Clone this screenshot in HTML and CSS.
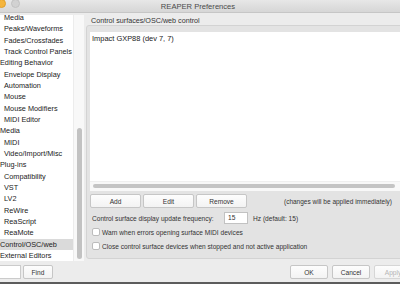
FILE: index.html
```html
<!DOCTYPE html>
<html lang="en">

<head>
  <meta charset="UTF-8">
  <meta name="viewport" content="width=device-width, initial-scale=1.0">
  <title>REAPER Preferences</title>
  <link rel="stylesheet" href="styles.css">
</head>

<body>
  <div class="window">
    <div class="titlebar">
      <div class="lights">
        <span class="light light-min"></span>
        <span class="light light-max"></span>
      </div>
      <div class="title">REAPER Preferences</div>
      <div></div>
    </div>

    <div class="main">
      <!-- Category tree -->
      <div class="sidebar">
        <ul class="tree">
          <li class="child">Media</li>
          <li class="child">Peaks/Waveforms</li>
          <li class="child">Fades/Crossfades</li>
          <li class="child">Track Control Panels</li>
          <li>Editing Behavior</li>
          <li class="child">Envelope Display</li>
          <li class="child">Automation</li>
          <li class="child">Mouse</li>
          <li class="child">Mouse Modifiers</li>
          <li class="child">MIDI Editor</li>
          <li>Media</li>
          <li class="child">MIDI</li>
          <li class="child">Video/Import/Misc</li>
          <li>Plug-ins</li>
          <li class="child">Compatibility</li>
          <li class="child">VST</li>
          <li class="child">LV2</li>
          <li class="child">ReWire</li>
          <li class="child">ReaScript</li>
          <li class="child">ReaMote</li>
          <li class="selected">Control/OSC/web</li>
          <li>External Editors</li>
        </ul>
        <div class="vscroll">
          <div class="vthumb"></div>
        </div>
      </div>

      <!-- Settings page -->
      <div class="panel">
        <div class="group-label">Control surfaces/OSC/web control</div>
        <div class="group">
          <div class="surface-list">
            <div class="surface-items">
              <div class="surface-item">Impact GXP88 (dev 7, 7)</div>
            </div>
            <div class="hscroll">
              <div class="hthumb"></div>
            </div>
          </div>

          <div class="button-row">
            <button class="btn">Add</button>
            <button class="btn">Edit</button>
            <button class="btn">Remove</button>
            <span class="note">(changes will be applied immediately)</span>
          </div>

          <div class="freq-row">
            <span class="freq-label">Control surface display update frequency:</span>
            <span class="field">15</span>
            <span class="freq-hint">Hz (default: 15)</span>
          </div>

          <label class="check-row"><span class="checkbox"></span>Warn when errors opening surface MIDI devices</label>
          <label class="check-row"><span class="checkbox"></span>Close control surface devices when stopped and not active application</label>
        </div>
      </div>
    </div>

    <div class="footer">
      <span class="search"></span>
      <button class="btn btn-find">Find</button>
      <div class="dialog-buttons">
        <button class="btn btn-dialog">OK</button>
        <button class="btn btn-dialog">Cancel</button>
        <button class="btn btn-dialog disabled">Apply</button>
      </div>
    </div>
  </div>
</body>

</html>
```

FILE: styles.css
```css
body {
  margin: 0;
  padding: 0;
  background: #ececec;
  font-family: 'Liberation Sans', Arial, sans-serif;
  color: #222;
  overflow: hidden;
}

.window {
  width: 400px;
  height: 284px;
  display: flex;
  flex-direction: column;
  overflow: hidden;
  border-bottom: 2px solid #5c5c5c;
  box-sizing: border-box;
}

/* Title bar */
.titlebar {
  height: 13px;
  flex: none;
  display: grid;
  grid-template-columns: 1fr auto 1fr;
  padding-right: 4px;
  background: linear-gradient(#e7e7e7, #d6d6d6);
  border-bottom: 1px solid #c6c6c6;
  box-sizing: border-box;
}

.lights {
  display: flex;
  gap: 5px;
  margin-left: -3px;
  margin-top: -1px;
}

.light {
  width: 9px;
  height: 9px;
  border-radius: 50%;
  box-sizing: border-box;
}

.light-min {
  background: #f5b53d;
  border: 1px solid #e0a02c;
}

.light-max {
  background: #d2d2d2;
  border: 1px solid #c2c2c2;
}

.title {
  font-size: 7.6px;
  line-height: 13px;
  color: #4a4a4a;
}

/* Main area */
.main {
  height: 248px;
  flex: none;
  display: flex;
}

.sidebar {
  flex: none;
  margin-top: 2px;
  width: 84px;
  height: 246px;
  display: flex;
  background: #fff;
  overflow: hidden;
}

.tree {
  flex: none;
  list-style: none;
  margin: -3px 0 0 0;
  padding: 0;
  width: 73px;
  font-size: 7.3px;
}

.tree li {
  height: 11.33px;
  line-height: 11.33px;
  white-space: nowrap;
  overflow: hidden;
  padding-left: 0;
}

.tree li.child {
  padding-left: 4px;
}

.tree li.selected {
  background: #dadada;
}

.vscroll {
  flex: none;
  width: 11px;
  background: #f8f8f8;
  border-left: 1px solid #ececec;
  box-sizing: border-box;
}

.vthumb {
  margin: 113px 0 0 3px;
  width: 5px;
  height: 131px;
  border-radius: 3px;
  background: #c2c2c2;
}

.panel {
  flex: none;
  margin-left: 2px;
  padding-top: 4px;
  display: flex;
  flex-direction: column;
}

.group-label {
  font-size: 7.2px;
  line-height: 8px;
  color: #333;
  padding-left: 5px;
}

.group {
  width: 320px;
  height: 234px;
  box-sizing: border-box;
  background: #e3e3e3;
  border: 1px solid #d3d3d3;
  border-radius: 3px;
  padding: 6px 0 0 3px;
  display: flex;
  flex-direction: column;
}

.surface-list {
  height: 159px;
  flex: none;
  background: #fff;
  display: flex;
  flex-direction: column;
}

.surface-items {
  flex: 1;
  padding: 2px 2px 0;
}

.surface-item {
  font-size: 7.45px;
  line-height: 10px;
  color: #222;
}

.hscroll {
  height: 10px;
  background: #f8f8f8;
  border-top: 1px solid #efefef;
  box-sizing: border-box;
  padding: 2px 10px 0 3px;
}

.hthumb {
  height: 4px;
  border-radius: 2px;
  background: #c4c4c4;
}

/* Buttons */
.btn {
  font-family: 'Liberation Sans', Arial, sans-serif;
  font-size: 6.6px;
  color: #333;
  background: linear-gradient(#fdfdfd, #f3f3f3);
  border: 1px solid #c6c6c6;
  border-radius: 2px;
  padding: 0;
  height: 14px;
  box-sizing: border-box;
}

.button-row {
  margin-top: 3px;
  height: 14px;
  display: flex;
  align-items: center;
  gap: 2px;
  padding-right: 13px;
}

.button-row .btn {
  width: 51px;
}

.note {
  margin-left: auto;
  font-size: 6.5px;
  color: #333;
}

.freq-row {
  margin-top: 4px;
  height: 12px;
  display: flex;
  align-items: center;
  font-size: 6.6px;
  color: #333;
}

.freq-label {
  width: 132px;
  padding-left: 2px;
}

.field {
  width: 24px;
  height: 12px;
  box-sizing: border-box;
  background: #fff;
  border: 1px solid #c2c2c2;
  padding-left: 3px;
  line-height: 10px;
}

.freq-hint {
  margin-left: 5px;
}

.check-row {
  margin-top: 2px;
  height: 12px;
  display: flex;
  align-items: center;
  gap: 2px;
  padding-left: 2px;
  font-size: 6.6px;
  color: #333;
  white-space: nowrap;
}

.checkbox {
  width: 8px;
  height: 8px;
  box-sizing: border-box;
  background: #fff;
  border: 1px solid #bcbcbc;
  border-radius: 2px;
}

/* Footer */
.footer {
  flex: 1;
  display: flex;
  align-items: flex-start;
  padding-top: 4px;
  gap: 2px;
}

.search {
  width: 24px;
  height: 14px;
  margin-left: -3px;
  box-sizing: border-box;
  background: #fff;
  border: 1px solid #cbcbcb;
}

.btn-find {
  width: 30px;
}

.dialog-buttons {
  margin-left: auto;
  margin-right: -12px;
  display: flex;
  gap: 4px;
}

.btn-dialog {
  width: 38px;
}

.btn-dialog.disabled {
  color: #b5b5b5;
  border-color: #d6d6d6;
}
```
